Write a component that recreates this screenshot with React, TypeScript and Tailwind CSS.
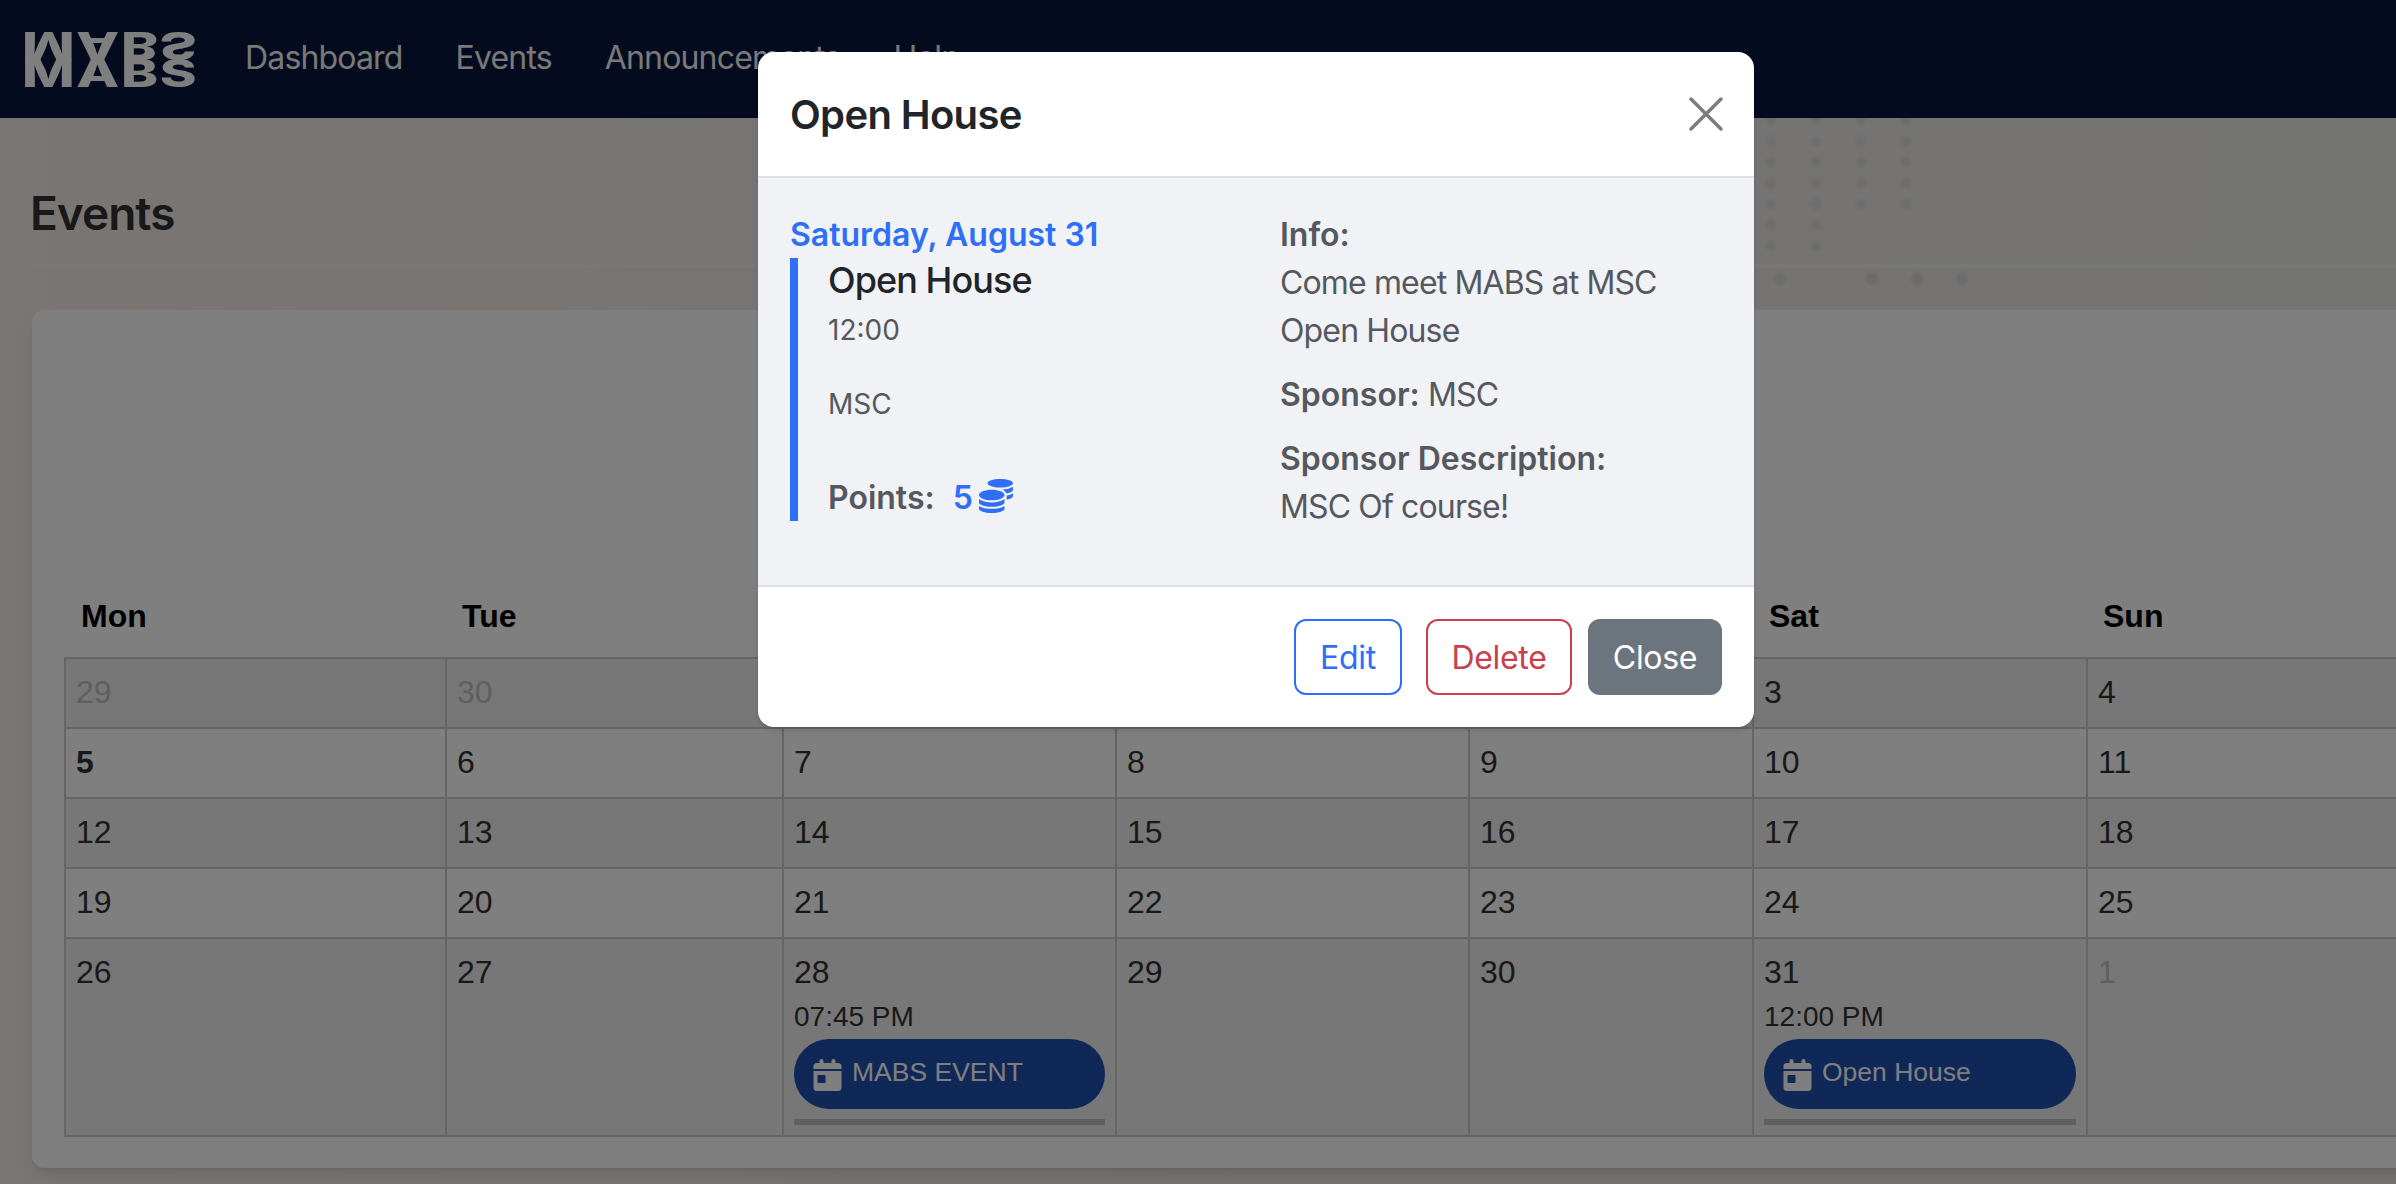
import { X } from 'lucide-react'
import { FaCoins } from 'react-icons/fa'
import { FaCalendarDay } from 'react-icons/fa6'

const weekdays = ['Mon', 'Tue', 'Wed', 'Thu', 'Fri', 'Sat', 'Sun']

const headerColumns = 'grid grid-cols-[381px_337px_333px_353px_284px_334px_1fr]'

type Day = { n: number; muted?: boolean; bold?: boolean; time?: string; event?: string }

const weeks: Day[][] = [
  [{ n: 29, muted: true }, { n: 30, muted: true }, { n: 31, muted: true }, { n: 1 }, { n: 2 }, { n: 3 }, { n: 4 }],
  [{ n: 5, bold: true }, { n: 6 }, { n: 7 }, { n: 8 }, { n: 9 }, { n: 10 }, { n: 11 }],
  [{ n: 12 }, { n: 13 }, { n: 14 }, { n: 15 }, { n: 16 }, { n: 17 }, { n: 18 }],
  [{ n: 19 }, { n: 20 }, { n: 21 }, { n: 22 }, { n: 23 }, { n: 24 }, { n: 25 }],
  [
    { n: 26 },
    { n: 27 },
    { n: 28, time: '07:45 PM', event: 'MABS EVENT' },
    { n: 29 },
    { n: 30 },
    { n: 31, time: '12:00 PM', event: 'Open House' },
    { n: 1, muted: true },
  ],
]

function Logo() {
  return (
    <div className="w-[176px] font-['Inter'] text-[38px] font-extrabold tracking-[0.03em] text-white">
      <div className="h-[28px] origin-left -scale-y-100 scale-x-[1.47] leading-[28px]">MABS</div>
      <div className="h-[27px] origin-left scale-x-[1.47] leading-[27px]">MABS</div>
    </div>
  )
}

function Navbar() {
  return (
    <nav className="relative z-10 flex h-[118px] items-center bg-[#08163c] pl-[22px] font-['Inter'] text-[32px] tracking-[-0.026em] text-[#f2f2f2]">
      <Logo />
      <div className="ml-[47px] flex gap-[53px] pb-[2px]">
        <a>Dashboard</a>
        <a>Events</a>
        <a>Announcements</a>
        <a>Help</a>
      </div>
    </nav>
  )
}

function BackgroundDots() {
  return (
    <div className="absolute left-[1766px] top-[115px] blur-[1px]">
      <div className="grid grid-cols-[repeat(4,10px)] gap-x-[35px] gap-y-[11px]">
        {Array.from({ length: 26 }).map((_, i) => (
          <span
            key={i}
            className={`h-[10px] w-[10px] rounded-full bg-[#dcdcde] ${i === 22 || i === 23 ? 'invisible' : ''}`}
          />
        ))}
      </div>
      <div className="mt-[22px] flex pl-[8px]">
        <span className="h-[12px] w-[12px] rounded-full bg-[#dcdcde]" />
        <span className="ml-[80px] h-[12px] w-[12px] rounded-full bg-[#d8d8da]" />
        <span className="ml-[33px] h-[12px] w-[12px] rounded-full bg-[#d8d8da]" />
        <span className="ml-[33px] h-[12px] w-[12px] rounded-full bg-[#d8d8da]" />
      </div>
    </div>
  )
}

function DayCell({ day, tall, striped }: { day: Day; tall: boolean; striped: boolean }) {
  return (
    <div
      className={`border-l-2 border-t-2 border-[#cbcbcb] pl-[10px] pr-[10px] pt-[9px] ${tall ? 'h-[198px]' : 'h-[70px]'} ${striped ? 'bg-[#eeeeee]' : ''}`}
    >
      <div
        className={`h-[48px] text-[32px] leading-[48px] ${day.muted ? 'text-[#bebebe]' : 'text-[#333]'} ${day.bold ? 'font-bold' : ''}`}
      >
        {day.n}
      </div>
      {day.event && (
        <>
          <div className="h-[43px] text-[28px] leading-[42px] text-[#333]">{day.time}</div>
          <div className="flex h-[70px] items-center rounded-full bg-[#1e50b0] pb-[3px] pl-[19px] text-[26.5px] text-white">
            <FaCalendarDay className="mr-[10px] h-[32px] w-[29px] translate-y-[2px]" />
            {day.event}
          </div>
          <div className="mt-[10px] h-[6px] bg-[#bebebe]" />
        </>
      )}
    </div>
  )
}

function Calendar() {
  return (
    <div className="ml-[2px] mt-[42px] rounded-xl bg-white px-[32px] pb-[31px] pt-[276px] font-['Liberation_Sans'] shadow-lg">
      <div className={`${headerColumns} h-[71px] items-center pb-[12px]`}>
        {weekdays.map((d) => (
          <div key={d} className="pl-[17px] text-[32px] font-bold leading-none text-black">
            {d}
          </div>
        ))}
      </div>
      <div className={`${headerColumns} border-b-2 border-[#cbcbcb]`}>
        {weeks.map((week, w) =>
          week.map((day, i) => (
            <DayCell key={`${w}-${i}`} day={day} tall={w === 4} striped={w % 2 === 0} />
          )),
        )}
      </div>
    </div>
  )
}

function EventModal() {
  return (
    <div className="absolute inset-y-0 left-0 z-30 flex w-[2512px] justify-center pt-[52px] font-['Inter']">
      <div className="h-[675px] w-[996px] overflow-hidden rounded-2xl bg-white shadow-md">
        {/* Header */}
        <div className="flex h-[124px] items-center justify-between pl-[32px] pr-[18px]">
          <h2 className="pt-[1px] text-[40px] font-semibold tracking-[-0.016em] text-[#212529]">Open House</h2>
          <X size={60} strokeWidth={1.4} className="text-[#7c7c7c]" />
        </div>

        {/* Body */}
        <div className="flex h-[411px] border-y-2 border-[#dee2e6] bg-[#f0f2f6] pl-[32px] pt-[33px] text-[#55585e]">
          <div className="w-[490px]">
            <p className="text-[32px] font-semibold leading-[47px] text-[#2f6ff6]">Saturday, August 31</p>
            <div className="h-[263px] border-l-[8px] border-[#2f6ff6] pl-[30px]">
              <p className="text-[36px] font-medium leading-[44px] tracking-[-0.026em] text-[#212529]">Open House</p>
              <p className="mt-[7px] text-[28px] leading-[42px]">12:00</p>
              <p className="mt-[32px] text-[28px] leading-[42px]">MSC</p>
              <div className="mt-[49px] flex items-center text-[32px] font-semibold leading-[48px]">
                Points:
                <span className="ml-[18px] text-[#2f6ff6]">5</span>
                <FaCoins className="ml-[6px] h-[34px] w-[34px] -translate-y-[2px] text-[#2f6ff6]" />
              </div>
            </div>
          </div>
          <div className="w-[420px] text-[32px] leading-[48px]">
            <p className="font-semibold">Info:</p>
            <p className="mb-[16px] tracking-[-0.027em]">Come meet MABS at MSC Open House</p>
            <p className="mb-[16px] tracking-[-0.027em]">
              <span className="font-semibold tracking-normal">Sponsor:</span> MSC
            </p>
            <p className="font-semibold">Sponsor Description:</p>
            <p className="tracking-[-0.027em]">MSC Of course!</p>
          </div>
        </div>

        {/* Footer */}
        <div className="flex justify-end pr-[32px] pt-[32px] text-[32px] tracking-[-0.01em]">
          <button className="h-[76px] w-[108px] rounded-xl border-2 border-[#2f6ff6] pt-[2px] text-[#2f6ff6]">Edit</button>
          <button className="ml-[24px] h-[76px] w-[146px] rounded-xl border-2 border-[#c9404b] pt-[2px] text-[#c9404b]">Delete</button>
          <button className="ml-[16px] h-[76px] w-[134px] rounded-xl bg-[#6c757d] pt-[2px] text-white">Close</button>
        </div>
      </div>
    </div>
  )
}

export default function App() {
  return (
    <div className="relative h-[1184px] w-[2396px] overflow-hidden">
      <div className="relative h-[1184px] w-[2512px] bg-gradient-to-r from-[#f4ece8] via-[#ebe8e6] to-[#e9e8e3]">
        <Navbar />
        <BackgroundDots />
        <main className="relative pl-[30px] pr-[32px]">
          <h1 className="flex h-[150px] items-end border-b-4 border-[#f0f0f2] pb-[21px] font-['Inter'] text-[46px] font-semibold leading-[60px] tracking-[-0.022em] text-[#333]">
            Events
          </h1>
          <Calendar />
        </main>
      </div>

      {/* Modal backdrop */}
      <div className="absolute inset-0 z-20 bg-black/50" />
      <EventModal />
    </div>
  )
}
